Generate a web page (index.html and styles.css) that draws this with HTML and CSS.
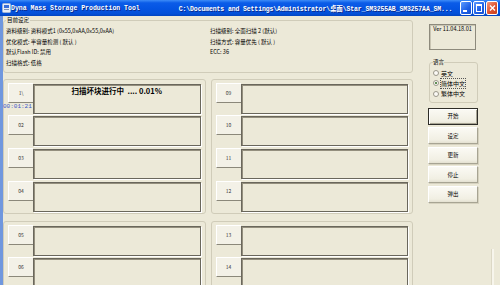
FILE: index.html
```html
<!DOCTYPE html>
<html lang="zh-CN">
<head>
    <meta charset="UTF-8">
    <title>Dyna Mass Storage Production Tool</title>
    <link rel="stylesheet" href="styles.css">
</head>
<body>
    <div class="titlebar">
        <svg class="app-icon" width="9" height="10" viewBox="0 0 9 10">
            <rect x="0.5" y="0.5" width="8" height="9" rx="1" fill="#e8eef8" stroke="#9fb4d8"/>
            <rect x="2" y="2" width="5" height="3" fill="#3a6fd8"/>
            <rect x="2" y="6" width="5" height="1" fill="#7a8fb8"/>
        </svg>
        <span class="title">Dyna Mass Storage Production Tool</span>
        <span class="path">C:\Documents and Settings\Administrator\桌面\Star_SM3255AB_SM3257AA_SM...</span>
        <div class="caption-btns">
            <span class="cap cap-min"></span>
            <span class="cap cap-max"></span>
            <span class="cap cap-close">
                <svg width="9" height="10" viewBox="0 0 9 10"><path d="M2 2.5 L7 7.5 M7 2.5 L2 7.5" stroke="#fff" stroke-width="1.4"/></svg>
            </span>
        </div>
    </div>

    <div class="client">
        <div class="main">
            <fieldset class="settings">
                <legend>目前设定</legend>
                <div class="settings-grid">
                    <div>资料级别: 资料模式1 (0x55,0xAA,0x55,0xAA)</div>
                    <div>扫描级别: 全面扫描 2 (默认)</div>
                    <div>优化模式: 半容量检测 ( 默认 )</div>
                    <div>扫描方式: 容量优先 ( 默认 )</div>
                    <div>默认Flash ID: 禁用</div>
                    <div>ECC: 36</div>
                    <div>扫描格式: 低格</div>
                    <div></div>
                </div>
            </fieldset>

            <div class="ports">
                <div class="port-group">
                    <div class="port-row">
                        <div class="port-label">1\</div>
                        <span class="port-time">00:01:21</span>
                        <div class="port-box"><span class="port-status">扫描坏块进行中 &nbsp;.... 0.01%</span></div>
                    </div>
                    <div class="port-row"><div class="port-label">02</div><div class="port-box"></div></div>
                    <div class="port-row"><div class="port-label">03</div><div class="port-box"></div></div>
                    <div class="port-row"><div class="port-label">04</div><div class="port-box"></div></div>
                </div>
                <div class="port-group">
                    <div class="port-row"><div class="port-label">09</div><div class="port-box"></div></div>
                    <div class="port-row"><div class="port-label">10</div><div class="port-box"></div></div>
                    <div class="port-row"><div class="port-label">11</div><div class="port-box"></div></div>
                    <div class="port-row"><div class="port-label">12</div><div class="port-box"></div></div>
                </div>
                <div class="port-group">
                    <div class="port-row"><div class="port-label">05</div><div class="port-box"></div></div>
                    <div class="port-row"><div class="port-label">06</div><div class="port-box"></div></div>
                </div>
                <div class="port-group">
                    <div class="port-row"><div class="port-label">13</div><div class="port-box"></div></div>
                    <div class="port-row"><div class="port-label">14</div><div class="port-box"></div></div>
                </div>
            </div>
        </div>

        <div class="side">
            <div class="version">Ver 11.04.18.01</div>
            <fieldset class="lang">
                <legend>语言</legend>
                <div class="radio"><span class="radio-dot"></span><span>英文</span></div>
                <div class="radio"><span class="radio-dot checked"></span><span class="focus">简体中文</span></div>
                <div class="radio"><span class="radio-dot"></span><span>繁体中文</span></div>
            </fieldset>
            <button class="btn btn-default">开始</button>
            <button class="btn">设定</button>
            <button class="btn">更新</button>
            <button class="btn">停止</button>
            <button class="btn">弹出</button>
        </div>
        <div class="scroll-edge"></div>
    </div>
</body>
</html>
```

FILE: styles.css
```css
body {
    margin: 0;
    width: 500px;
    height: 285px;
    overflow: hidden;
    background-color: #ece9d8;
    font-family: "Noto Sans CJK SC", "Noto Sans", sans-serif;
    font-size: 5.5px;
    color: #000;
}
.titlebar {
    height: 16px;
    display: flex;
    align-items: center;
    padding-left: 2px;
    background: linear-gradient(#3d8cf7 0%, #0b5ce8 18%, #0555e3 50%, #0350d8 85%, #0245c0 100%);
    color: #fff;
}
.title,
.path {
    font-family: "Liberation Mono", "Noto Sans CJK SC", monospace;
    font-weight: bold;
    font-size: 6.5px;
    white-space: pre;
    text-shadow: 1px 1px 0 #0a2a8a;
}
.path {
    margin-left: 39px;
    letter-spacing: -0.12px;
}
.caption-btns {
    margin-left: auto;
    margin-right: 2px;
    display: flex;
    gap: 1px;
}
.cap {
    width: 10px;
    height: 12px;
    border: 1px solid #fff;
    border-radius: 2px;
    background: linear-gradient(135deg, #5d9bff, #1d5fe5 60%, #1550d0);
    position: relative;
    display: flex;
    align-items: center;
    justify-content: center;
}
.cap-min::after {
    content: "";
    position: absolute;
    left: 2px;
    bottom: 2px;
    width: 4px;
    height: 2px;
    background: #fff;
}
.cap-max::after {
    content: "";
    position: absolute;
    left: 2px;
    top: 2px;
    width: 4px;
    height: 5px;
    border: 1px solid #fff;
    border-top-width: 2px;
}
.cap-close {
    background: linear-gradient(135deg, #f09a80, #e0522f 55%, #c8401f);
}

.client {
    display: flex;
    border-left: 3px solid #7097de;
    height: 269px;
}
.main {
    width: 410px;
}
fieldset {
    margin: 0;
    min-width: 0;
    border: 1px solid #d0ccb9;
    border-radius: 3px;
}
legend {
    padding: 0 1px;
    line-height: 8px;
}
.settings {
    padding: 2px 2px 3px 2px;
}
.settings-grid {
    display: grid;
    grid-template-columns: 204px 1fr;
    grid-auto-rows: 10.7px;
    line-height: 10.7px;
    white-space: nowrap;
}

.ports {
    margin-top: 6px;
    display: grid;
    grid-template-columns: 1fr 1fr;
    column-gap: 5px;
    row-gap: 7px;
}
.port-group {
    border: 1px solid #d0ccb9;
    border-radius: 3px;
    padding: 4px 4px 1px 4px;
    display: grid;
    grid-template-rows: repeat(4, 30px);
    row-gap: 2.67px;
}
.port-row {
    display: flex;
    position: relative;
}
.port-label {
    width: 24px;
    height: 18px;
    margin-top: -1px;
    flex: none;
    background-color: #f3f1e7;
    border-top: 1px solid #fff;
    border-left: 1px solid #fff;
    border-bottom: 1px solid #8b887a;
    text-align: center;
    line-height: 18px;
    font-size: 5px;
    color: #333;
}
.port-time {
    position: absolute;
    left: -5px;
    top: 19px;
    font-family: "Liberation Mono", monospace;
    font-size: 6px;
    color: #3d58c8;
}
.port-box {
    flex: 1;
    box-sizing: border-box;
    height: 30px;
    border: 1px solid #6a675c;
    box-shadow: inset 1px 1px 0 #948f7e, 1px 1px 0 #fff;
    text-align: center;
}
.port-status {
    display: block;
    margin-top: 1px;
    font-weight: bold;
    font-size: 7.5px;
    line-height: 9px;
}

.side {
    margin-left: 16px;
    width: 49px;
}
.version {
    margin-top: 8px;
    width: 47px;
    height: 26px;
    box-sizing: border-box;
    border: 1px solid #8d8a7c;
    box-shadow: inset 1px 1px 0 #c9c5b3;
    text-align: center;
    line-height: 9px;
}
.lang {
    margin-top: 8px;
    padding: 2px 2px 3px 3px;
}
.lang legend {
    padding: 0;
}
.radio {
    display: flex;
    align-items: center;
    gap: 2px;
    height: 10.3px;
    font-size: 6px;
}
.radio-dot {
    width: 4px;
    height: 4px;
    border: 1px solid #9a978a;
    border-radius: 50%;
    background-color: #fbfaf5;
    position: relative;
}
.radio-dot.checked::after {
    content: "";
    position: absolute;
    left: 1px;
    top: 1px;
    width: 2px;
    height: 2px;
    border-radius: 50%;
    background-color: #2d6b1f;
}
.focus {
    outline: 1px dotted #555;
}
.btn {
    display: block;
    width: 50px;
    height: 17px;
    margin: 2.5px 0 0 -1px;
    padding: 0;
    font-family: inherit;
    font-size: 5.5px;
    color: #000;
    background: linear-gradient(#fbfaf4, #f1efe3 80%, #e4e1d1);
    border: 1px solid;
    border-color: #fff #a7a493 #a7a493 #fff;
    box-shadow: 1px 1px 0 #d6d2bf;
}
.btn-default {
    margin-top: 5px;
    border: 1px solid #2e2d28;
    box-shadow: inset 1px 1px 0 #fff, inset -1px -1px 0 #a7a493;
}
.scroll-edge {
    align-self: flex-end;
    margin-left: 13px;
    width: 2px;
    height: 36px;
    background-color: #f7f5ec;
    border-left: 1px solid #dcd8c6;
}
```
